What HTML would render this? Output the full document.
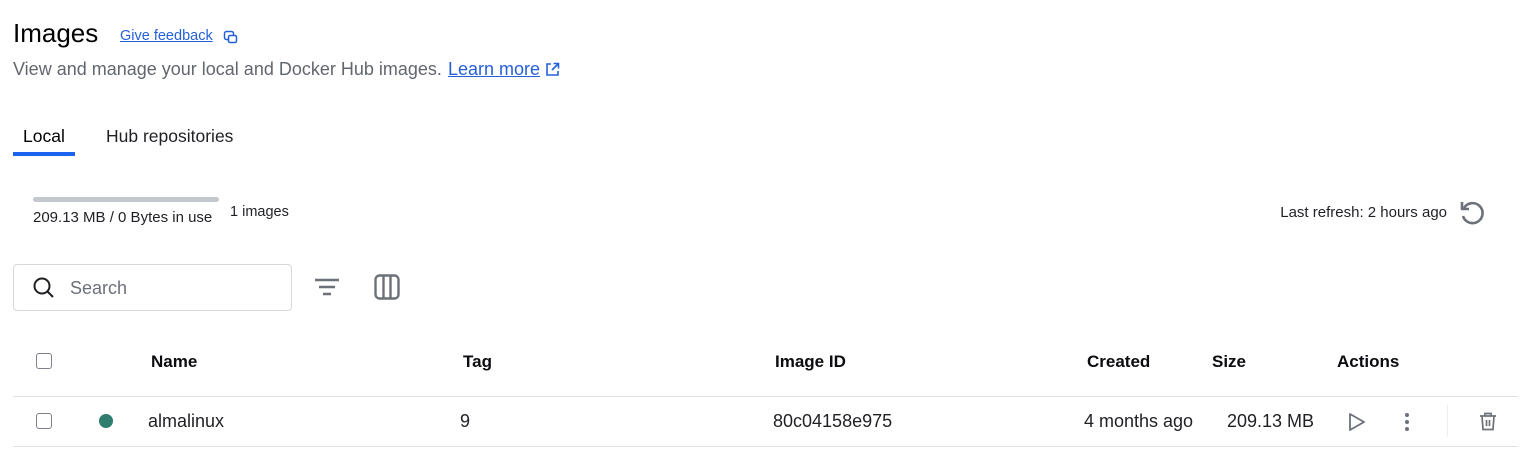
<!DOCTYPE html>
<html><head><meta charset="utf-8"><style>
*{margin:0;padding:0;box-sizing:border-box}
body{width:1540px;height:470px;background:#fff;font-family:"Liberation Sans",Arial,sans-serif;color:#000;position:relative;overflow:hidden}
.a{position:absolute;white-space:nowrap;line-height:1}
.h{font-size:17px;font-weight:bold;color:#0b0b10}
.c{font-size:18px;color:#1f2024}
.cb{position:absolute;width:16px;height:16px;border:1.5px solid #7d828a;border-radius:3px}
</style></head><body>
<div class="a" style="left:13px;top:20px;font-size:26px;color:#000">Images</div>
<div class="a" style="left:120px;top:29px;font-size:14.5px;color:#2560d8;text-decoration:underline">Give feedback</div>
<svg class="a" style="left:223px;top:30px" width="15" height="15" viewBox="0 0 15 15" fill="none" stroke="#2560d8" stroke-width="1.5"><rect x="1.5" y="1.5" width="9" height="8" rx="2"/><rect x="5.5" y="5.5" width="8" height="7" rx="1.5" fill="#fff"/></svg>
<div class="a" style="left:13px;top:60px;font-size:18px;color:#62666d">View and manage your local and Docker Hub images.</div>
<div class="a" style="left:448px;top:60px;font-size:18px;color:#2560d8;text-decoration:underline">Learn more</div>
<svg class="a" style="left:544px;top:61px" width="17" height="17" viewBox="0 0 17 17" fill="none" stroke="#2560d8" stroke-width="1.6"><path d="M7 3H3v11h11v-4M9.5 2.5h5v5M14.5 2.5L8 9"/></svg>
<div class="a" style="left:23px;top:128px;font-size:17.5px;color:#000;font-weight:500">Local</div>
<div style="position:absolute;left:13px;top:152px;width:62px;height:4px;background:#1d63ed"></div>
<div class="a" style="left:106px;top:128px;font-size:17.5px;color:#1f2024">Hub repositories</div>
<div style="position:absolute;left:33px;top:197px;width:186px;height:5px;background:#c4c8ce;border-radius:3px"></div>
<div class="a" style="left:33px;top:210px;font-size:15px;color:#1f2024">209.13 MB / 0 Bytes in use</div>
<div class="a" style="left:230px;top:205px;font-size:14.5px;color:#1f2024">1 images</div>
<div class="a" style="right:93px;top:205px;font-size:15px;color:#1f2024">Last refresh: 2 hours ago</div>
<svg class="a" style="left:1458px;top:199px" width="28" height="28" viewBox="0 0 28 28" fill="none" stroke="#6c7079" stroke-width="2.6"><path d="M6 9A10 10 0 1 1 5 17"/><path d="M4 3v7h7" stroke-linejoin="round"/></svg>
<div style="position:absolute;left:13px;top:264px;width:279px;height:47px;border:1px solid #d5d8dc;border-radius:4px"></div>
<svg class="a" style="left:32px;top:276px" width="24" height="24" viewBox="0 0 24 24" fill="none" stroke="#1f2024" stroke-width="2"><circle cx="10" cy="10" r="7.5"/><path d="M15.5 15.5L21 21"/></svg>
<div class="a" style="left:70px;top:279px;font-size:18px;color:#6c7079">Search</div>
<svg class="a" style="left:314px;top:276px" width="26" height="22" viewBox="0 0 26 22" stroke="#6c7079" stroke-width="2.4"><path d="M1 4h24M5 11h16M9 18h8"/></svg>
<svg class="a" style="left:374px;top:274px" width="26" height="26" viewBox="0 0 26 26" fill="none" stroke="#6c7079" stroke-width="2.4"><rect x="1.5" y="1.5" width="23" height="23" rx="4"/><path d="M9.5 2v22M16.5 2v22"/></svg>
<div class="cb" style="left:36px;top:353px"></div>
<div class="a h" style="left:151px;top:353px">Name</div>
<div class="a h" style="left:463px;top:353px">Tag</div>
<div class="a h" style="left:775px;top:353px">Image ID</div>
<div class="a h" style="left:1087px;top:353px">Created</div>
<div class="a h" style="left:1212px;top:353px">Size</div>
<div class="a h" style="left:1337px;top:353px">Actions</div>
<div style="position:absolute;left:13px;top:396px;width:1505px;height:1px;background:#dfe1e4"></div>
<div class="cb" style="left:36px;top:413px"></div>
<div style="position:absolute;left:99px;top:414px;width:14px;height:14px;border-radius:50%;background:#2e7d6e"></div>
<div class="a c" style="left:148px;top:412px">almalinux</div>
<div class="a c" style="left:460px;top:412px">9</div>
<div class="a c" style="left:773px;top:412px">80c04158e975</div>
<div class="a c" style="left:1084px;top:412px">4 months ago</div>
<div class="a c" style="left:1227px;top:412px">209.13 MB</div>
<svg class="a" style="left:1348px;top:412px" width="18" height="20" viewBox="0 0 18 20" fill="none" stroke="#6c7079" stroke-width="1.8" stroke-linejoin="round"><path d="M2 2l14 8-14 8z"/></svg>
<svg class="a" style="left:1403px;top:412px" width="8" height="20" viewBox="0 0 8 20" fill="#6c7079"><circle cx="4" cy="3" r="2"/><circle cx="4" cy="10" r="2"/><circle cx="4" cy="17" r="2"/></svg>
<div style="position:absolute;left:1447px;top:405px;width:1px;height:32px;background:#eceef0"></div>
<svg class="a" style="left:1479px;top:412px" width="18" height="19" viewBox="0 0 18 19" fill="none" stroke="#6c7079" stroke-width="1.7"><path d="M1 4h16M6 4V1.5h6V4M3 4l1 13.5h10L15 4M7.5 8v6M10.5 8v6"/></svg>
<div style="position:absolute;left:13px;top:446px;width:1505px;height:1px;background:#dfe1e4"></div>
</body></html>
